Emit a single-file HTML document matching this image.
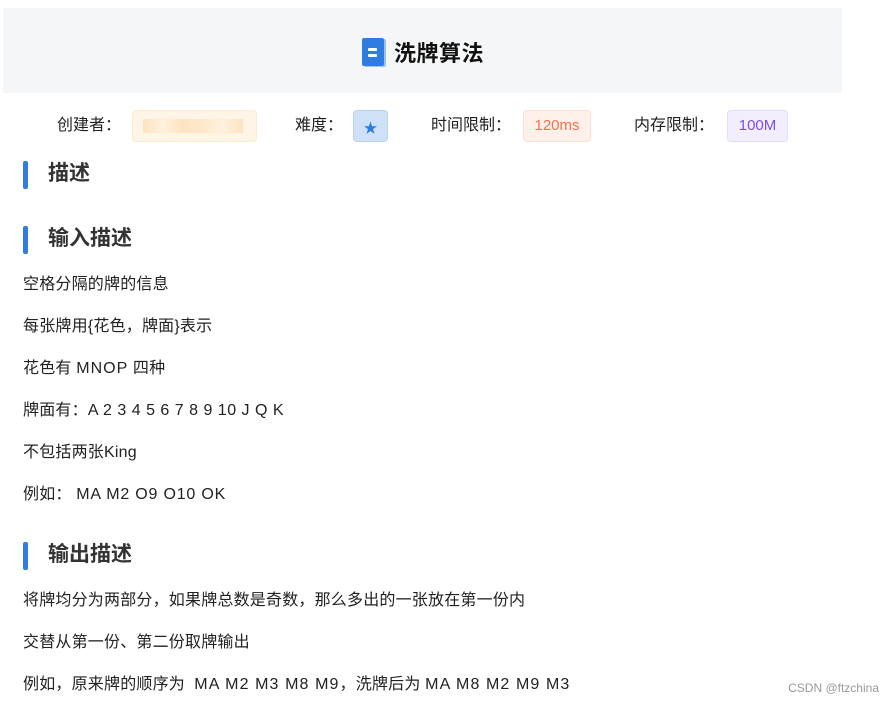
<!DOCTYPE html>
<html><head><meta charset="utf-8"><style>
body{margin:0;background:#fff;font-family:"Liberation Sans","Noto Sans CJK SC",sans-serif;color:#222;width:893px;height:704px;position:relative;overflow:hidden}
.hdr{position:absolute;left:3px;top:8px;width:839px;height:85px;background:#f5f6f8}
.title{position:absolute;left:362px;top:36px;font-size:22px;font-weight:bold;color:#111;display:flex;align-items:center;letter-spacing:.5px}
.ic{width:22px;height:28px;background:#2f7de1;border-radius:2px;margin-right:10px;position:relative;box-shadow:2px 1px 0 #9cc0f0}
.ic i{position:absolute;left:6px;width:9px;height:3px;background:#fff;border-radius:1px}
.meta{position:absolute;top:110px;height:32px;font-size:16px;color:#222;line-height:32px}
.tag{position:absolute;top:110px;height:32px;border-radius:4px;font-size:15px;line-height:30px;text-align:center}
.h{position:absolute;left:23px;font-size:21px;font-weight:bold;color:#333;height:28px;line-height:28px;padding-left:25px}
.h:before{content:"";position:absolute;left:0;top:1px;width:5px;height:28px;background:#2f7de1;border-radius:2px}
.p{position:absolute;left:23px;font-size:16px;color:#222;line-height:20px;letter-spacing:.2px}
.wm{position:absolute;right:14px;top:681px;font-size:12px;color:#999}
</style></head><body>
<div class="hdr"></div>
<div class="title"><div class="ic"><i style="top:10px"></i><i style="top:16px"></i></div>洗牌算法</div>
<div class="meta" style="left:57px">创建者：</div>
<div class="tag" style="left:132px;width:125px;background:#fff5e6;border:1px solid #fdebd3;box-sizing:border-box"><div style="position:absolute;left:10px;top:8px;width:100px;height:14px;background:linear-gradient(90deg,#fde1bd,#fff0dc,#fde1bd,#fee7c9,#fff0dc,#fde1bd);opacity:.9"></div></div>
<div class="meta" style="left:295px">难度：</div>
<div class="tag" style="left:353px;width:35px;background:#cfe1f8;border:1px solid #b9d3f3;box-sizing:border-box;color:#2f7de1;font-size:14px;line-height:34px">★</div>
<div class="meta" style="left:431px">时间限制：</div>
<div class="tag" style="left:523px;width:68px;background:#fff0ea;border:1px solid #fde0d5;box-sizing:border-box;color:#f7704d">120ms</div>
<div class="meta" style="left:634px">内存限制：</div>
<div class="tag" style="left:727px;width:61px;background:#f3eeff;border:1px solid #e5dcfb;box-sizing:border-box;color:#7c4dea">100M</div>
<div class="h" style="top:160px">描述</div>
<div class="h" style="top:225px">输入描述</div>
<div class="p" style="top:275px">空格分隔的牌的信息</div>
<div class="p" style="top:317px">每张牌用{花色，牌面}表示</div>
<div class="p" style="top:359px">花色有 <span style="letter-spacing:1px">MNOP</span> 四种</div>
<div class="p" style="top:401px">牌面有：<span style="letter-spacing:.5px">A 2 3 4 5 6 7 8 9 10 J Q K</span></div>
<div class="p" style="top:443px">不包括两张King</div>
<div class="p" style="top:485px">例如： <span style="letter-spacing:.8px">MA M2 O9 O10 OK</span></div>
<div class="h" style="top:541px">输出描述</div>
<div class="p" style="top:591px">将牌均分为两部分，如果牌总数是奇数，那么多出的一张放在第一份内</div>
<div class="p" style="top:633px">交替从第一份、第二份取牌输出</div>
<div class="p" style="top:675px">例如，原来牌的顺序为&nbsp; <span style="letter-spacing:1.1px">MA M2 M3 M8 M9</span>，洗牌后为 <span style="letter-spacing:1.1px">MA M8 M2 M9 M3</span></div>
<div class="wm">CSDN @ftzchina</div>
</body></html>
